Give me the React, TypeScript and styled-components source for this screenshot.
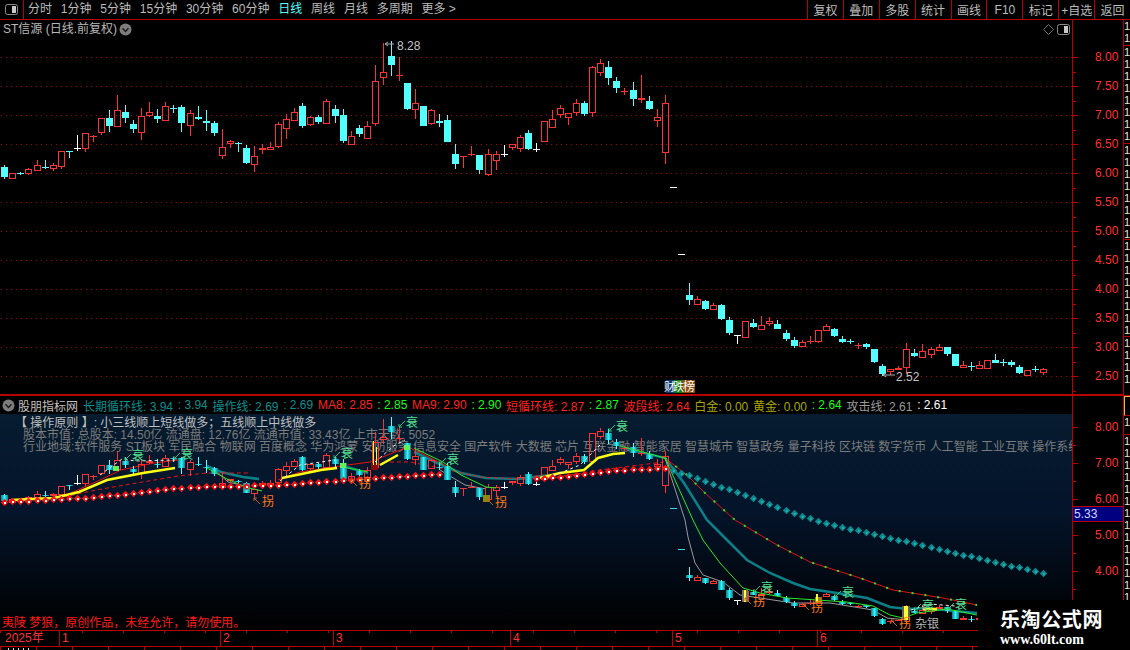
import React from "react";
import styled, { createGlobalStyle } from "styled-components";

const RED = "#ff3232";
const LINE = "#b80000";
const CYAN = "#54ffff";

const GlobalStyle = createGlobalStyle`
  html, body { margin: 0; padding: 0; background: #000; }
  body { font-family: "Liberation Sans", "Noto Sans CJK SC", sans-serif; font-size: 12px; }
`;

// candle rows are read off the screen at 1/3 px: colour, body top, body bottom, wick top, wick bottom
const rowsA =
  "c381,411,375,417 r400,418,400,418 c399,402,395,405 r388,403,385,405 r376,394,360,394 c381,384,360,388 r376,386,369,392 r334,380,334,386 c333,335,333,354 w324,327,285,332 r280,326,280,335 r289,292,285,305 r235,278,235,285 c234,258,210,276 r211,260,165,260 c216,234,195,249 c252,267,240,279 r229,278,204,300 r217,227,186,231 c228,237,207,249 r199,242,186,242 c203,206,195,219 c201,249,195,276 r220,257,210,288 c231,237,198,240 c243,248,210,273 c249,279,243,288 r322,347,267,357 r304,311,300,324 c310,313,306,336 c324,369,315,372 r349,374,318,396 r324,329,312,342 r322,329,306,329 r253,320,247,324 r238,266,222,297 r217,242,204,242 c198,258,189,264 r232,254,228,258 c231,246,225,252 r184,251,178,251 c207,228,195,249 c225,303,207,309 r289,314,273,314 c264,282,255,291";
const rowsB =
  "r289,326,273,326 r154,281,105,288 r127,143,40,165 c78,105,33,138 r136,139,81,153 c159,237,159,240 r220,239,177,267 c228,288,228,288 r241,282,237,285 c273,278,252,291 c270,336,255,336 c372,402,342,417 r378,381,378,414 r372,376,348,378 c375,420,375,432 r373,434,357,438 r373,392,363,420 w372,375,345,381 r343,353,343,360 r322,356,315,366 c309,357,300,360 w357,360,339,366 r274,335,274,335 r268,293,240,293 r235,254,225,264 r250,263,250,285 r220,248,207,258 c219,252,213,258 r112,250,108,261 r100,128,87,138 c111,144,93,165 c153,174,141,189 r183,186,174,195 c180,207,156,228 r205,209,135,219 c213,237,198,240 r262,272,237,291 r220,368,195,402";
const rowsC =
  "c75,90,39,105 r88,104,78,104 c93,116,90,120 r105,119,99,119 c105,147,102,150 c150,189,141,195 w196,199,196,222 r154,203,154,203 c159,171,147,174 r166,179,138,179 r153,161,141,168 c163,177,150,177 c189,207,180,213 c210,228,201,234 r217,231,210,231 r213,217,198,222 r181,215,181,218 r169,182,162,182 c177,198,174,201 c207,216,198,219 c212,215,207,222 r226,229,219,237 c222,231,219,237 c237,276,237,279 c288,312,282,318 r298,305,298,315 r294,299,288,299 r238,293,219,312 c249,258,237,261 r244,263,222,263 r238,255,231,264 r232,242,222,242 c231,252,231,258 c252,288,252,288 r286,293,273,293 c288,291,276,303 r286,296,273,296 r271,297,271,297 c270,279,252,279 c276,279,267,288 c276,285,270,291 c291,309,285,312 r301,317,301,317 c296,299,288,306 r298,308,294,315";

type Candle = { kind: string; top: number; bottom: number; high: number; low: number };

const parseRows = (rows: string, offset: number): Candle[] =>
  rows.split(" ").map((row) => {
    const [top, bottom, high, low] = row.slice(1).split(",").map(Number);
    return {
      kind: row[0],
      top: top / 3 + offset,
      bottom: bottom / 3 + offset,
      high: high / 3 + offset,
      low: low / 3 + offset,
    };
  });

const candles: Candle[] = [
  ...parseRows(rowsA, 40),
  ...parseRows(rowsB, 30),
  { kind: "d", top: 187, bottom: 188, high: 187, low: 188 },
  { kind: "d", top: 254, bottom: 255, high: 254, low: 255 },
  ...parseRows(rowsC, 270),
];

const candleX = (i: number) => Math.round(4.3 + 8.054 * i);
const toLower = (y: number) => 427 + ((y - 57) * 36) / 58;

type Point = [number, number];

const interp = (pts: Point[], x: number) => {
  for (let i = 1; i < pts.length; i++) {
    if (x <= pts[i][0]) {
      const [x0, y0] = pts[i - 1];
      const [x1, y1] = pts[i];
      return y0 + ((y1 - y0) * (x - x0)) / (x1 - x0);
    }
  }
  return pts[pts.length - 1][1];
};

const pointsAttr = (pts: Point[]) => pts.map((p) => p.join(",")).join(" ");

const CandleMark = ({ c, i, lower }: { c: Candle; i: number; lower?: boolean }) => {
  const x = candleX(i);
  const map = lower ? toLower : (y: number) => y;
  const top = Math.round(map(c.top));
  const bottom = Math.round(map(c.bottom));
  const high = Math.round(map(c.high));
  const low = Math.round(map(c.low));
  const h = bottom - top;
  let color = c.kind === "c" ? CYAN : c.kind === "r" ? RED : "#ffffff";
  if (c.kind === "d" && lower) color = "#3fd8e8";
  const flat = h <= 2 || c.kind === "d" || c.kind === "w";
  const wick = (
    <>
      {high < top && <rect x={x} y={high} width={1} height={top - high} fill={color} />}
      {low > bottom && <rect x={x} y={bottom} width={1} height={low - bottom} fill={color} />}
    </>
  );
  if (flat) {
    return (
      <g>
        {wick}
        <rect x={x - 3} y={top} width={7} height={Math.max(1, h)} fill={lower && c.kind === "c" ? "url(#tube)" : color} />
      </g>
    );
  }
  if (c.kind === "c") {
    return (
      <g>
        {wick}
        <rect x={x - 3} y={top} width={7} height={h} fill={lower ? "url(#tube)" : color} />
      </g>
    );
  }
  return (
    <g>
      {wick}
      <rect x={x - 2.5} y={top + 0.5} width={6} height={h - 1} fill="none" stroke={color} strokeWidth={1} />
    </g>
  );
};

const PanelIcon = () => (
  <svg width="13" height="11" viewBox="0 0 13 11">
    <rect x="0.5" y="0.5" width="12" height="10" rx="2" fill="none" stroke="#8a8a8a" />
    <rect x="7" y="2" width="4" height="7" fill="#c8c8c8" />
  </svg>
);

const ChevronDisc = () => (
  <svg width="13" height="13" viewBox="0 0 13 13">
    <circle cx="6.5" cy="6.5" r="6" fill="#7d7d7d" />
    <path d="M3.5 5.2 L6.5 8.4 L9.5 5.2" fill="none" stroke="#1c1c1c" strokeWidth="1.4" />
  </svg>
);

const DiamondIcon = () => (
  <svg width="11" height="11" viewBox="0 0 11 11">
    <path d="M5.5 0.5 L10.5 5.5 L5.5 10.5 L0.5 5.5 Z" fill="none" stroke="#707070" />
  </svg>
);

const periods = ["分时", "1分钟", "5分钟", "15分钟", "30分钟", "60分钟", "日线", "周线", "月线", "多周期", "更多 >"];
const actions = ["复权", "叠加", "多股", "统计", "画线", "F10", "标记", "+自选", "返回"];

const priceLevels = ["8.00", "7.50", "7.00", "6.50", "6.00", "5.50", "5.00", "4.50", "4.00", "3.50", "3.00", "2.50"];

const PriceChart = () => (
  <PlotSvg viewBox="0 20 1072 374">
    {priceLevels.map((_, i) => (
      <line key={i} x1="1" x2="1072" y1={57 + i * 29 + 0.5} y2={57 + i * 29 + 0.5} stroke="#a00000" strokeDasharray="1 4" />
    ))}
    <g shapeRendering="crispEdges">
      {candles.map((c, i) => (
        <CandleMark key={i} c={c} i={i} />
      ))}
    </g>
    <path d="M385 44 H394 M385 44 l3 -2 M385 44 l3 2" stroke="#b0b0b0" fill="none" />
    <ChartLabel x={397} y={46} fill="#c4c4c4">8.28</ChartLabel>
    <path d="M883 375 H895 M883 375 l3 -2 M883 375 l3 2" stroke="#b0b0b0" fill="none" />
    <ChartLabel x={896} y={377} fill="#c4c4c4">2.52</ChartLabel>
    <g shapeRendering="crispEdges">
      <rect x="666" y="380" width="8" height="13" fill="#0a3a78" />
      <rect x="674" y="380" width="8" height="13" fill="#0a7a12" />
      <rect x="682" y="380" width="13" height="13" fill="#8a4a08" />
    </g>
    <ChartLabel x={664} y={387} fill="#fff" $size={11}>财</ChartLabel>
    <ChartLabel x={673} y={387} fill="#fff" $size={11}>跌</ChartLabel>
    <ChartLabel x={683} y={387} fill="#fff" $size={12}>榜</ChartLabel>
  </PlotSvg>
);

const redDotPath: Point[] = [[0, 502], [96, 497], [164, 489], [214, 486], [278, 485], [328, 481], [375, 478], [436, 474], [536, 478], [560, 477], [614, 470], [664, 468]];
const tealDotPath: Point[] = [[664, 462], [672, 470], [697, 478], [817, 521], [1043, 573]];

const operateLines: Point[][] = [
  [[207, 466], [221, 472], [243, 477], [259, 479]],
  [[343, 466], [368, 473]],
  [[414, 452], [446, 467], [461, 473], [486, 478], [518, 479], [550, 475]],
  [[624, 448], [665, 458], [684, 483], [707, 520], [727, 540], [747, 560], [770, 573], [793, 583], [810, 589], [837, 593], [867, 598], [890, 607], [907, 609], [927, 608], [953, 611], [977, 613]],
];
const longYellow: Point[][] = [
  [[11, 500], [54, 498], [79, 492], [107, 480], [143, 473], [175, 468]],
  [[282, 478], [321, 470], [337, 468]],
  [[380, 465], [398, 455]],
  [[540, 478], [560, 473], [584, 470], [598, 458], [613, 454], [625, 453]],
  [[923, 609], [937, 609]],
];
const thinGreen: Point[][] = [
  [[207, 468], [225, 478], [245, 487], [262, 491]],
  [[343, 467], [368, 472]],
  [[414, 448], [443, 462], [461, 475], [486, 487], [496, 488]],
  [[620, 446], [665, 458], [693, 520], [703, 540], [720, 563], [743, 588], [760, 593], [787, 598], [817, 600], [847, 602], [873, 606], [890, 615], [903, 618], [917, 613], [947, 609], [977, 615]],
];
const thinGray: Point[][] = [
  [[215, 470], [228, 482], [245, 486]],
  [[440, 470], [465, 485], [486, 489]],
  [[665, 458], [685, 520], [688, 537], [695, 563], [703, 575], [723, 582], [740, 595], [760, 598], [793, 603], [830, 603], [873, 610], [887, 618], [907, 620]],
];
const thinRed: Point[][] = [
  [[71, 493], [100, 480], [121, 470], [154, 463], [178, 460]],
  [[278, 480], [300, 472], [340, 466], [370, 462], [395, 452], [408, 447], [425, 455], [450, 468]],
];
const dashedRed: Point[][] = [
  [[8, 501], [64, 497], [96, 490], [125, 485], [178, 476], [207, 473], [250, 473]],
  [[390, 462], [410, 462], [440, 468], [480, 477], [540, 480], [600, 470], [664, 462]],
];
const stitchLine: Point[] = [[665, 458], [687, 475], [705, 493], [735, 520], [777, 545], [810, 562], [860, 578], [893, 590], [943, 598], [977, 605]];
const whiteDash: Point[][] = [
  [[100, 475], [122, 459], [135, 461], [175, 460]],
  [[280, 481], [300, 465], [335, 460]],
  [[375, 462], [395, 445], [405, 440]],
  [[548, 478], [580, 465], [600, 445]],
  [[905, 612], [930, 604], [955, 606]],
];

const fallLabels: Point[] = [[138, 456], [187, 455], [347, 454], [412, 423], [453, 460], [622, 427], [767, 588], [848, 593], [928, 606], [961, 605]];
const turnLabels: Point[] = [[268, 502], [365, 484], [501, 503], [759, 602], [817, 608], [905, 624]];

const Diamond = ({ x, y, fill, core }: { x: number; y: number; fill: string; core: string }) => (
  <g>
    <path d={`M${x + 0.5} ${y - 3.2} L${x + 4.2} ${y + 0.5} L${x + 0.5} ${y + 4.2} L${x - 3.2} ${y + 0.5} Z`} fill={fill} />
    <rect x={x} y={y} width={1.5} height={1.5} fill={core} shapeRendering="crispEdges" />
  </g>
);

const IndicatorChart = () => (
  <OverlaySvg viewBox="0 414 1072 216">
    <defs>
      <linearGradient id="tube" x1="0" x2="1" y1="0" y2="0">
        <stop offset="0" stopColor="#067c8c" />
        <stop offset="0.5" stopColor="#33f4fb" />
        <stop offset="1" stopColor="#067c8c" />
      </linearGradient>
    </defs>
    {operateLines.map((pts, i) => (
      <polyline key={i} points={pointsAttr(pts)} fill="none" stroke="#0a8088" strokeWidth={2.5} />
    ))}
    {thinGray.map((pts, i) => (
      <polyline key={i} points={pointsAttr(pts)} fill="none" stroke="#9a9a9a" />
    ))}
    {thinRed.map((pts, i) => (
      <polyline key={i} points={pointsAttr(pts)} fill="none" stroke="#f01010" />
    ))}
    {dashedRed.map((pts, i) => (
      <polyline key={i} points={pointsAttr(pts)} fill="none" stroke="#f01010" strokeDasharray="4 3" />
    ))}
    <polyline points={pointsAttr(stitchLine)} fill="none" stroke="#e01414" />
    <polyline points={pointsAttr(stitchLine)} fill="none" stroke="#30e030" strokeWidth={2} strokeDasharray="2 11" />
    <g shapeRendering="crispEdges">
      {candles.map((c, i) => (
        <CandleMark key={i} c={c} i={i} lower />
      ))}
    </g>
    {thinGreen.map((pts, i) => (
      <polyline key={i} points={pointsAttr(pts)} fill="none" stroke="#28e828" />
    ))}
    {longYellow.map((pts, i) => (
      <polyline key={i} points={pointsAttr(pts)} fill="none" stroke="#ffff14" strokeWidth={2.5} />
    ))}
    {whiteDash.map((pts, i) => (
      <polyline key={i} points={pointsAttr(pts)} fill="none" stroke="#f0f0f0" strokeDasharray="3 3" />
    ))}
    {candles.slice(0, 83).map((_, i) => {
      const x = candleX(i);
      if (x > 444 && x < 532) return null;
      return <Diamond key={i} x={x} y={Math.round(interp(redDotPath, x))} fill="#f81414" core="#ffffff" />;
    })}
    {candles.map((_, i) => {
      const x = candleX(i);
      if (x < 672 || x > 1044) return null;
      return <Diamond key={i} x={x} y={Math.round(interp(tealDotPath, x))} fill="#0a8a8e" core="#2aa8aa" />;
    })}
    <g shapeRendering="crispEdges">
      <rect x="371" y="463" width="7" height="7" fill="#8a0a0a" />
      <rect x="373" y="441" width="1" height="24" fill="#ffff30" />
      <rect x="376" y="447" width="1" height="18" fill="#ffff30" />
      <rect x="483" y="495" width="7" height="7" fill="#8a8a10" />
      <rect x="113" y="466" width="6" height="5" fill="#60f060" />
      <rect x="340" y="463" width="6" height="5" fill="#60f060" />
      <rect x="404" y="445" width="6" height="5" fill="#60f060" />
      <rect x="742" y="590" width="6" height="12" fill="#707070" />
      <rect x="744" y="590" width="2" height="12" fill="#ffff30" />
      <rect x="815" y="597" width="6" height="6" fill="#8a8a10" />
      <rect x="816" y="594" width="2" height="8" fill="#ffff30" />
      <rect x="902" y="606" width="8" height="14" fill="#606060" />
      <rect x="904" y="606" width="4" height="14" fill="#ffff30" />
    </g>
    {fallLabels.map(([x, y], i) => (
      <g key={i}>
        <path d={`M${x - 7} ${y - 2} L${x - 13} ${y + 4} M${x - 13} ${y + 4} h3 M${x - 13} ${y + 4} v-3`} stroke="#35c070" fill="none" />
        <ChartLabel x={x} y={y} fill="#55e090" textAnchor="middle">衰</ChartLabel>
      </g>
    ))}
    {turnLabels.map(([x, y], i) => (
      <g key={i}>
        <path d={`M${x - 8} ${y + 2} L${x - 14} ${y - 4} M${x - 14} ${y - 4} h3 M${x - 14} ${y - 4} v3`} stroke="#c8601a" fill="none" />
        <ChartLabel x={x} y={y} fill="#ff7a1a" textAnchor="middle">拐</ChartLabel>
      </g>
    ))}
    <ChartLabel x={927} y={624} fill="#b4b4b4" textAnchor="middle">杂银</ChartLabel>
  </OverlaySvg>
);

const ValueAxis = ({ labels, first, step, height, top }: { labels: string[]; first: number; step: number; height: number; top: number }) => (
  <AxisSvg viewBox={`1073 ${top} 50 ${height}`} height={height}>
    <g shapeRendering="crispEdges">
      {labels.map((_, i) => (
        <g key={i}>
          <rect x="1073" y={first + i * step} width="5" height="1" fill={LINE} />
          <rect x="1073" y={first + i * step + step / 2} width="3" height="1" fill={LINE} />
        </g>
      ))}
    </g>
    {labels.map((label, i) => (
      <ChartLabel key={label} x={1095} y={first + i * step} fill={RED}>{label}</ChartLabel>
    ))}
  </AxisSvg>
);

const StripCell = ({ rows, height }: { rows: number; height: number }) => (
  <StripBox $h={height}>
    {Array.from({ length: rows }, (_, i) => (
      <StripRow key={i}>1</StripRow>
    ))}
  </StripBox>
);

export default function App() {
  return (
    <Page>
      <GlobalStyle />
      <Toolbar>
        <PanelToggle>
          <PanelIcon />
        </PanelToggle>
        <PeriodList>
          {periods.map((p) => (
            <Period key={p} $active={p === "日线"}>{p}</Period>
          ))}
        </PeriodList>
        <ActionList>
          {actions.map((a) => (
            <ActionButton key={a}>{a}</ActionButton>
          ))}
        </ActionList>
      </Toolbar>

      <Workspace>
        <Charts>
          <PricePane>
            <PriceCanvas>
              <PriceChart />
              <StockTitle>
                ST信源 (日线.前复权) <ChevronDisc />
              </StockTitle>
              <CornerTools>
                <DiamondIcon />
                <PanelIcon />
              </CornerTools>
            </PriceCanvas>
            <AxisColumn>
              <ValueAxis labels={priceLevels} first={57} step={29} top={20} height={374} />
            </AxisColumn>
          </PricePane>

          <IndicatorPane>
            <IndicatorMain>
              <IndicatorHeader>
                <ChevronDisc />
                <IndicatorName>股朋指标网</IndicatorName>
                <Reading $color="#0a8f8f" $gap={5}>长期循环线: 3.94</Reading>
                <Reading $color="#0a8f8f">: 3.94</Reading>
                <Reading $color="#0a8f8f">操作线: 2.69</Reading>
                <Reading $color="#0a8f8f">: 2.69</Reading>
                <Reading $color="#ff2020">MA8: 2.85</Reading>
                <Reading $color="#14ff14">: 2.85</Reading>
                <Reading $color="#ff2020">MA9: 2.90</Reading>
                <Reading $color="#14ff14">: 2.90</Reading>
                <Reading $color="#ff2020">短循环线: 2.87</Reading>
                <Reading $color="#14ff14">: 2.87</Reading>
                <Reading $color="#ff2020">波段线: 2.64</Reading>
                <Reading $color="#a8a800">白金: 0.00</Reading>
                <Reading $color="#a8a800">黄金: 0.00</Reading>
                <Reading $color="#14ff14">: 2.64</Reading>
                <Reading $color="#9a9a9a">攻击线: 2.61</Reading>
                <Reading $color="#ffffff">: 2.61</Reading>
              </IndicatorHeader>
              <IndicatorPlot>
                <NoteBlock>
                  <NoteTitle>【 操作原则 】: 小三线顺上短线做多；五线顺上中线做多</NoteTitle>
                  <NoteLine>股本市值: 总股本: 14.50亿 流通盘: 12.76亿 流通市值: 33.43亿 上市天数: 5052</NoteLine>
                  <NoteLine>
                    行业地域:软件服务 ST板块 军民融合 物联网 百度概念 华为鸿蒙 安防服务 信息安全 国产软件 大数据 芯片 互联金融 智能家居 智慧城市 智慧政务 量子科技 区块链 数字货币 人工智能 工业互联 操作系统
                  </NoteLine>
                </NoteBlock>
                <IndicatorChart />
                <Credit>夷陵 梦狼，原创作品，未经允许，请勿使用。</Credit>
              </IndicatorPlot>
            </IndicatorMain>
            <AxisColumn>
              <ValueAxis labels={["8.00", "7.00", "6.00", "5.00", "4.00"]} first={427} step={36} top={396} height={234} />
              <LastPrice>5.33</LastPrice>
            </AxisColumn>
          </IndicatorPane>

          <TimeAxis>
            <YearCell>2025年</YearCell>
            <MonthCell $w={161}>1</MonthCell>
            <MonthCell $w={113}>2</MonthCell>
            <MonthCell $w={177}>3</MonthCell>
            <MonthCell $w={162}>4</MonthCell>
            <MonthCell $w={145}>5</MonthCell>
            <MonthCell $w={306}>6</MonthCell>
          </TimeAxis>
          <BottomEdge />
        </Charts>
        <SideStrip>
          <StripCell rows={2} height={26} />
          <StripCell rows={8} height={98} />
          <StripCell rows={8} height={96} />
          <StripCell rows={8} height={97} />
          <StripCell rows={4} height={59} />
          <StripFlag />
          <StripCell rows={1} height={19} />
          <StripCell rows={15} height={190} />
        </SideStrip>
      </Workspace>

      <Watermark>
        <WatermarkTitle>乐淘公式网</WatermarkTitle>
        <WatermarkUrl>www.60lt.com</WatermarkUrl>
      </Watermark>
    </Page>
  );
}

const Page = styled.div`
  position: relative;
  width: 1130px;
  height: 650px;
  overflow: hidden;
  background: #000;
  display: flex;
  flex-direction: column;
`;

const Toolbar = styled.header`
  height: 19px;
  flex: none;
  display: flex;
  align-items: stretch;
  border-bottom: 1px solid ${LINE};
  color: #bcbcbc;
`;

const PanelToggle = styled.div`
  width: 23px;
  flex: none;
  display: flex;
  align-items: center;
  justify-content: center;
  border-right: 1px solid ${LINE};
`;

const PeriodList = styled.nav`
  display: flex;
  align-items: center;
  gap: 8.8px;
  padding-left: 4px;
  flex: 1;
`;

const Period = styled.span<{ $active?: boolean }>`
  line-height: 19px;
  color: ${(p) => (p.$active ? CYAN : "#bcbcbc")};
  white-space: nowrap;
`;

const ActionList = styled.div`
  display: flex;
  width: 323px;
  flex: none;
`;

const ActionButton = styled.div`
  flex: 1;
  display: flex;
  align-items: center;
  justify-content: center;
  border-left: 1px solid ${LINE};
  white-space: nowrap;
`;

const Workspace = styled.main`
  flex: 1;
  display: flex;
  min-height: 0;
`;

const Charts = styled.div`
  width: 1123px;
  flex: none;
  display: flex;
  flex-direction: column;
`;

const PricePane = styled.section`
  height: 374px;
  flex: none;
  display: flex;
`;

const PriceCanvas = styled.div`
  position: relative;
  width: 1072px;
  flex: none;
`;

const PlotSvg = styled.svg`
  display: block;
  width: 1072px;
  height: 374px;
`;

const ChartLabel = styled.text<{ $size?: number }>`
  font-family: "Liberation Sans", "Noto Sans CJK SC", sans-serif;
  font-size: ${(p) => p.$size ?? 12}px;
  dominant-baseline: central;
`;

const StockTitle = styled.div`
  position: absolute;
  left: 3px;
  top: 2px;
  display: flex;
  align-items: center;
  gap: 2px;
  color: #b8b8b8;
  line-height: 15px;
`;

const CornerTools = styled.div`
  position: absolute;
  right: 2px;
  top: 4px;
  display: flex;
  align-items: center;
  gap: 3px;
`;

const AxisColumn = styled.aside`
  position: relative;
  width: 51px;
  flex: none;
  border-left: 1px solid ${LINE};
  box-sizing: border-box;
`;

const AxisSvg = styled.svg`
  display: block;
  width: 50px;
`;

const IndicatorPane = styled.section`
  height: 236px;
  flex: none;
  display: flex;
  border-top: 2px solid ${LINE};
  box-sizing: border-box;
`;

const IndicatorMain = styled.div`
  width: 1072px;
  flex: none;
  display: flex;
  flex-direction: column;
`;

const IndicatorHeader = styled.div`
  height: 18px;
  flex: none;
  display: flex;
  align-items: center;
  padding-left: 2px;
  white-space: nowrap;
`;

const IndicatorName = styled.span`
  margin-left: 3px;
  color: #c0c0c0;
`;

const Reading = styled.span<{ $color: string; $gap?: number }>`
  margin-left: ${(p) => p.$gap ?? 4.7}px;
  color: ${(p) => p.$color};
`;

const IndicatorPlot = styled.div`
  position: relative;
  flex: 1;
  min-height: 0;
  overflow: hidden;
  display: flex;
  flex-direction: column;
  background: linear-gradient(#071c30 0%, #04142a 45%, #000000 100%);
`;

const OverlaySvg = styled.svg`
  position: absolute;
  inset: 0;
  width: 1072px;
  height: 216px;
`;

const NoteBlock = styled.div`
  padding: 3px 0 0 23px;
  white-space: nowrap;
  line-height: 12px;
`;

const NoteTitle = styled.div`
  margin-left: -8px;
  color: #c0c0c0;
`;

const NoteLine = styled.div`
  color: #7c7c7c;
`;

const Credit = styled.div`
  position: relative;
  margin-top: auto;
  padding-left: 2px;
  color: #ff1a1a;
  line-height: 14px;
`;

const LastPrice = styled.div`
  position: absolute;
  left: 0;
  right: 0;
  top: 110px;
  height: 14px;
  padding-left: 1px;
  line-height: 14px;
  color: #d0d8ff;
  background: #000080;
  border-top: 1px solid ${LINE};
  border-bottom: 1px solid ${LINE};
`;

const TimeAxis = styled.div`
  height: 16px;
  flex: none;
  display: flex;
  box-sizing: border-box;
  border-top: 1px solid ${LINE};
  background: repeating-linear-gradient(90deg, ${LINE} 0 1px, transparent 1px 41px) 0 0 / 100% 2px no-repeat;
`;

const YearCell = styled.div`
  width: 59px;
  flex: none;
  padding-left: 5px;
  box-sizing: border-box;
  color: ${RED};
  line-height: 15px;
`;

const MonthCell = styled.div<{ $w: number }>`
  width: ${(p) => p.$w}px;
  flex: none;
  padding-left: 2px;
  box-sizing: border-box;
  color: ${RED};
  line-height: 15px;
  border-left: 1px solid ${LINE};
`;

const BottomEdge = styled.div`
  flex: 1;
  border-top: 1px solid ${LINE};
  background:
    repeating-linear-gradient(90deg, #dcdcdc 0 1px, transparent 1px 5px) 8px 1px / 22px 2px no-repeat,
    repeating-linear-gradient(90deg, ${LINE} 0 1px, transparent 1px 36px);
`;

const SideStrip = styled.aside`
  flex: 1;
  border-left: 1px solid ${LINE};
  display: flex;
  flex-direction: column;
  overflow: hidden;
`;

const StripBox = styled.div<{ $h: number }>`
  height: ${(p) => p.$h}px;
  flex: none;
  overflow: hidden;
  box-sizing: border-box;
  border-bottom: 1px solid ${LINE};
`;

const StripRow = styled.div`
  height: 12px;
  line-height: 12px;
  font-size: 11px;
  color: #e6e6e6;
`;

const StripFlag = styled.div`
  height: 20px;
  flex: none;
  box-sizing: border-box;
  border: 1px solid #d8c040;
  border-right: 0;
  border-bottom: 1px solid ${LINE};
`;

const Watermark = styled.aside`
  position: absolute;
  right: 0;
  bottom: 0;
  width: 152px;
  height: 50px;
  background: #000;
  color: #fff;
  display: flex;
  flex-direction: column;
  align-items: flex-start;
  box-sizing: border-box;
  padding: 6px 0 0 22px;
`;

const WatermarkTitle = styled.div`
  font-family: "Noto Sans CJK SC", sans-serif;
  font-size: 20px;
  font-weight: 700;
  line-height: 26px;
  letter-spacing: 0.6px;
`;

const WatermarkUrl = styled.div`
  font-family: "Liberation Serif", serif;
  font-size: 14px;
  font-weight: 700;
  line-height: 16px;
`;
